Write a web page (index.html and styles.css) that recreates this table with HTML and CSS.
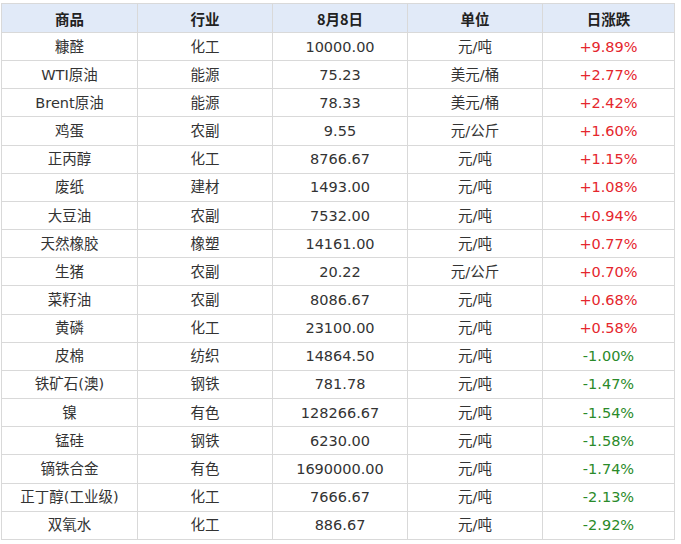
FILE: index.html
```html
<!DOCTYPE html>
<html lang="zh">
<head>
<meta charset="utf-8">
<link rel="stylesheet" href="styles.css">
</head>
<body>
<table class="tbl">
<colgroup><col class="c1"><col class="c2"><col class="c3"><col class="c4"><col class="c5"></colgroup>
<thead>
<tr><th>商品</th><th>行业</th><th>8月8日</th><th>单位</th><th>日涨跌</th></tr>
</thead>
<tbody>
<tr><td>糠醛</td><td>化工</td><td>10000.00</td><td>元/吨</td><td class="up">+9.89%</td></tr>
<tr><td>WTI原油</td><td>能源</td><td>75.23</td><td>美元/桶</td><td class="up">+2.77%</td></tr>
<tr><td>Brent原油</td><td>能源</td><td>78.33</td><td>美元/桶</td><td class="up">+2.42%</td></tr>
<tr><td>鸡蛋</td><td>农副</td><td>9.55</td><td>元/公斤</td><td class="up">+1.60%</td></tr>
<tr><td>正丙醇</td><td>化工</td><td>8766.67</td><td>元/吨</td><td class="up">+1.15%</td></tr>
<tr><td>废纸</td><td>建材</td><td>1493.00</td><td>元/吨</td><td class="up">+1.08%</td></tr>
<tr><td>大豆油</td><td>农副</td><td>7532.00</td><td>元/吨</td><td class="up">+0.94%</td></tr>
<tr><td>天然橡胶</td><td>橡塑</td><td>14161.00</td><td>元/吨</td><td class="up">+0.77%</td></tr>
<tr><td>生猪</td><td>农副</td><td>20.22</td><td>元/公斤</td><td class="up">+0.70%</td></tr>
<tr><td>菜籽油</td><td>农副</td><td>8086.67</td><td>元/吨</td><td class="up">+0.68%</td></tr>
<tr><td>黄磷</td><td>化工</td><td>23100.00</td><td>元/吨</td><td class="up">+0.58%</td></tr>
<tr><td>皮棉</td><td>纺织</td><td>14864.50</td><td>元/吨</td><td class="down">-1.00%</td></tr>
<tr><td>铁矿石(澳)</td><td>钢铁</td><td>781.78</td><td>元/吨</td><td class="down">-1.47%</td></tr>
<tr><td>镍</td><td>有色</td><td>128266.67</td><td>元/吨</td><td class="down">-1.54%</td></tr>
<tr><td>锰硅</td><td>钢铁</td><td>6230.00</td><td>元/吨</td><td class="down">-1.58%</td></tr>
<tr><td>镝铁合金</td><td>有色</td><td>1690000.00</td><td>元/吨</td><td class="down">-1.74%</td></tr>
<tr><td>正丁醇(工业级)</td><td>化工</td><td>7666.67</td><td>元/吨</td><td class="down">-2.13%</td></tr>
<tr><td>双氧水</td><td>化工</td><td>886.67</td><td>元/吨</td><td class="down">-2.92%</td></tr>
</tbody>
</table>
</body>
</html>
```
FILE: styles.css
```css
html, body {
  margin: 0;
  padding: 0;
  background: #ffffff;
}
body {
  padding: 3px 0 0 1px;
  font-family: "DejaVu Sans", "Noto Sans CJK SC", sans-serif;
  font-size: 14.5px;
  color: #333333;
}
.tbl {
  border-collapse: collapse;
  table-layout: fixed;
  width: 673px;
}
.c1 { width: 136px; }
.c2 { width: 135px; }
.c3 { width: 135px; }
.c4 { width: 135px; }
.c5 { width: 132px; }
.tbl th, .tbl td {
  border: 1px solid #d9d9d9;
  text-align: center;
  padding: 0;
  white-space: nowrap;
  overflow: hidden;
}
.tbl th {
  height: 28px;
  background: #e1eaf8;
  font-weight: bold;
  color: #222222;
  font-family: "Noto Sans CJK SC", "DejaVu Sans", sans-serif;
  font-size: 14.5px;
}
.tbl td {
  height: 27.17px;
  line-height: 18px;
}
.tbl td.up { color: #e5262d; }
.tbl td.down { color: #2a8a2a; }
```
